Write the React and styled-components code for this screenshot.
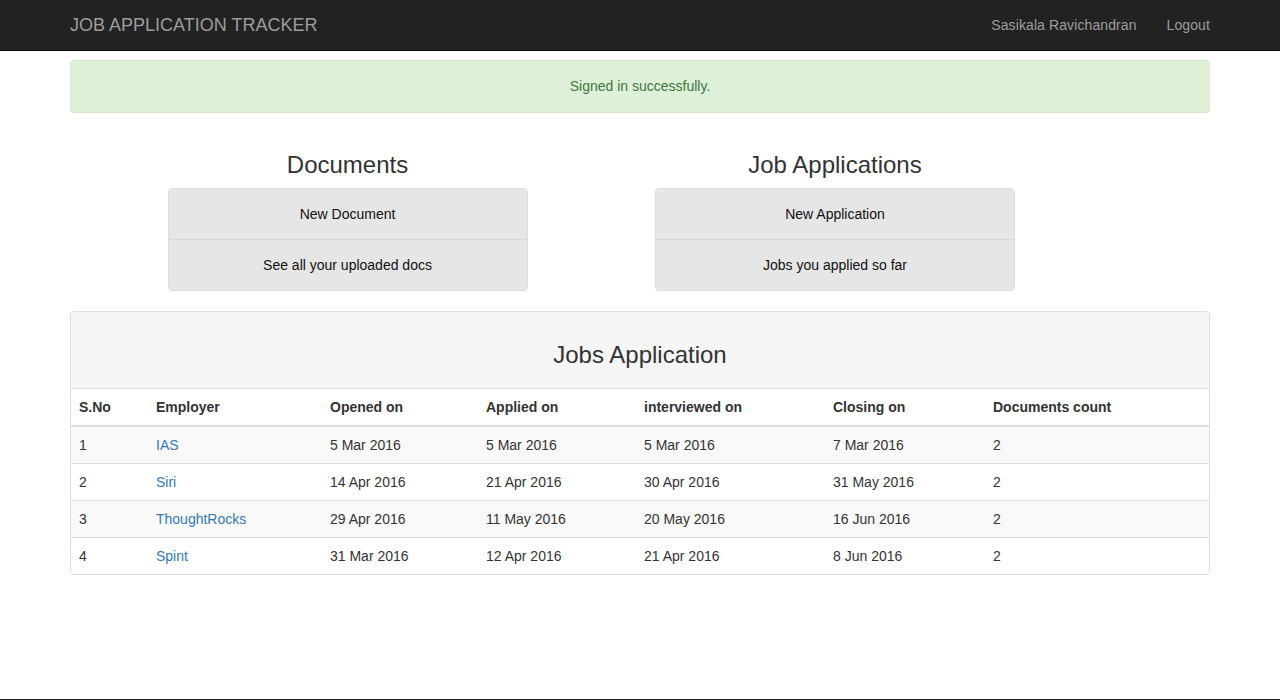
import React from "react";
import styled, { createGlobalStyle } from "styled-components";

const GlobalStyle = createGlobalStyle`
  * { box-sizing: border-box; }
  body {
    margin: 0;
    font-family: "Liberation Sans", Arial, Helvetica, sans-serif;
    font-size: 14px;
    line-height: 20px;
    color: #333;
    background: #fff;
  }
`;

const Navbar = styled.nav`
  height: 51px;
  background: #222;
  border-bottom: 1px solid #080808;
`;

const Container = styled.div`
  width: 1170px;
  margin: 0 auto;
  padding: 0 15px;
`;

const NavInner = styled(Container)`
  display: flex;
  justify-content: space-between;
  align-items: center;
  height: 50px;
`;

const Brand = styled.a`
  font-size: 18px;
  line-height: 20px;
  color: #9d9d9d;
  text-decoration: none;
`;

const NavLinks = styled.ul`
  list-style: none;
  margin: 0 -15px 0 0;
  padding: 0;
  display: flex;
`;

const NavLink = styled.a`
  display: block;
  padding: 15px;
  line-height: 20px;
  color: #9d9d9d;
  text-decoration: none;
  letter-spacing: 0.1px;
`;

const Alert = styled.div`
  margin-top: 9px;
  padding: 15px 15px 16px;
  background: #dff0d8;
  border: 1px solid #d6e9c6;
  border-radius: 4px;
  color: #3c763d;
  text-align: center;
  margin-bottom: 19px;
`;

const Row = styled.div`
  display: flex;
  margin: 0 -15px;
`;

const Col = styled.div`
  width: 390px;
  padding: 0 15px;
  margin-left: 97.5px;
`;

const Heading = styled.h3`
  font-size: 24px;
  font-weight: 500;
  line-height: 26px;
  margin: 20px 0 10px;
  text-align: center;
  color: #333;
`;

const ListGroup = styled.div`
  border: 1px solid #ddd;
  border-radius: 4px;
  overflow: hidden;
  margin-bottom: 20px;
`;

const ListItem = styled.a`
  display: block;
  padding: 15px;
  line-height: 20px;
  background: #e6e6e6;
  color: #111;
  text-align: center;
  text-decoration: none;
  & + & {
    border-top: 1px solid #dadada;
  }
`;

const Panel = styled.div`
  border: 1px solid #ddd;
  border-radius: 4px;
  overflow: hidden;
  margin-bottom: 20px;
`;

const PanelHeading = styled.div`
  background: #f5f5f5;
  border-bottom: 1px solid #ddd;
  padding: 10px 15px;
`;

const Table = styled.table`
  width: 100%;
  border-collapse: collapse;
  border-spacing: 0;
`;

const Th = styled.th`
  text-align: left;
  padding: 8px;
  line-height: 20px;
  font-weight: bold;
  border-bottom: 2px solid #ddd;
  width: ${(p) => p.$w}px;
`;

const Tr = styled.tr`
  background: ${(p) => (p.$odd ? "#f9f9f9" : "#fff")};
`;

const Td = styled.td`
  padding: 8px;
  line-height: 20px;
  border-top: 1px solid #ddd;
`;

const Link = styled.a`
  color: #337ab7;
  text-decoration: none;
`;

const FooterLine = styled.div`
  position: fixed;
  left: 0;
  right: 0;
  bottom: 0;
  height: 1px;
  background: #222;
`;

const columns = [
  ["S.No", 77],
  ["Employer", 174],
  ["Opened on", 156],
  ["Applied on", 158],
  ["interviewed on", 189],
  ["Closing on", 160],
  ["Documents count", 224],
];

const jobs = [
  ["1", "IAS", "5 Mar 2016", "5 Mar 2016", "5 Mar 2016", "7 Mar 2016", "2"],
  ["2", "Siri", "14 Apr 2016", "21 Apr 2016", "30 Apr 2016", "31 May 2016", "2"],
  ["3", "ThoughtRocks", "29 Apr 2016", "11 May 2016", "20 May 2016", "16 Jun 2016", "2"],
  ["4", "Spint", "31 Mar 2016", "12 Apr 2016", "21 Apr 2016", "8 Jun 2016", "2"],
];

export default function App() {
  return (
    <>
      <GlobalStyle />
      <Navbar>
        <NavInner>
          <Brand href="#">JOB APPLICATION TRACKER</Brand>
          <NavLinks>
            <li><NavLink href="#">Sasikala Ravichandran</NavLink></li>
            <li><NavLink href="#">Logout</NavLink></li>
          </NavLinks>
        </NavInner>
      </Navbar>
      <Container>
        <Alert>Signed in successfully.</Alert>
        <Row>
          <Col>
            <Heading>Documents</Heading>
            <ListGroup>
              <ListItem href="#">New Document</ListItem>
              <ListItem href="#">See all your uploaded docs</ListItem>
            </ListGroup>
          </Col>
          <Col>
            <Heading>Job Applications</Heading>
            <ListGroup>
              <ListItem href="#">New Application</ListItem>
              <ListItem href="#">Jobs you applied so far</ListItem>
            </ListGroup>
          </Col>
        </Row>
        <Panel>
          <PanelHeading>
            <Heading>Jobs Application</Heading>
          </PanelHeading>
          <Table>
            <thead>
              <tr>
                {columns.map(([label, w]) => (
                  <Th key={label} $w={w}>{label}</Th>
                ))}
              </tr>
            </thead>
            <tbody>
              {jobs.map((job, i) => (
                <Tr key={job[0]} $odd={i % 2 === 0}>
                  {job.map((cell, j) => (
                    <Td key={j}>{j === 1 ? <Link href="#">{cell}</Link> : cell}</Td>
                  ))}
                </Tr>
              ))}
            </tbody>
          </Table>
        </Panel>
      </Container>
      <FooterLine />
    </>
  );
}
